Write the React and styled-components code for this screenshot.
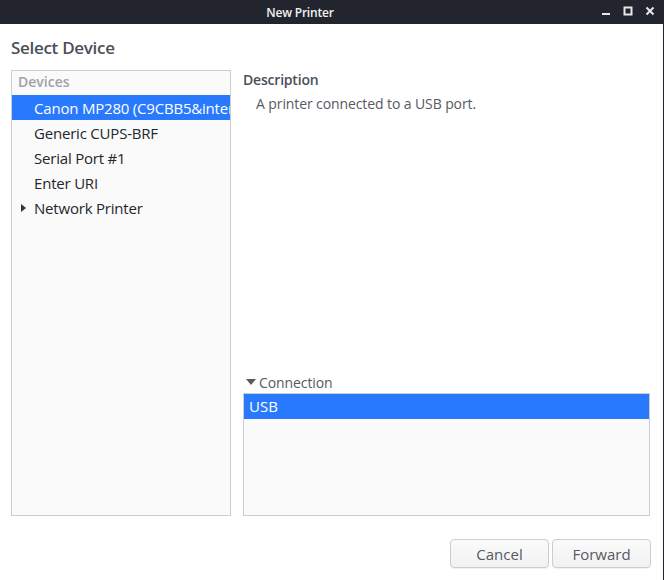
import React from 'react';
import styled, { createGlobalStyle } from 'styled-components';

const GlobalStyle = createGlobalStyle`
  html, body {
    margin: 0;
    padding: 0;
    background: #ffffff;
  }
  body {
    font-family: "Open Sans", "Noto Sans", sans-serif;
  }
`;

const devices = [
  { name: 'Canon MP280 (C9CBB5&inter', selected: true },
  { name: 'Generic CUPS-BRF' },
  { name: 'Serial Port #1' },
  { name: 'Enter URI' },
  { name: 'Network Printer', expander: true },
];

const App = () => {
  return (
    <Window>
      <GlobalStyle />
      <TitleBar>
        <Title>New Printer</Title>
        <WindowButtons>
          <svg width="10" height="10" viewBox="0 0 10 10">
            <rect x="1" y="7" width="8" height="2" fill="#e8e8e8" />
          </svg>
          <svg width="10" height="10" viewBox="0 0 10 10">
            <rect x="1.5" y="1.5" width="7" height="7" fill="none" stroke="#e8e8e8" strokeWidth="2" />
          </svg>
          <svg width="10" height="10" viewBox="0 0 10 10">
            <path d="M1.5 1.5 L8.5 8.5 M8.5 1.5 L1.5 8.5" stroke="#e8e8e8" strokeWidth="2" />
          </svg>
        </WindowButtons>
      </TitleBar>
      <Body>
        <Heading>Select Device</Heading>
        <Columns>
          <DeviceList>
            <ListHeader>Devices</ListHeader>
            {devices.map((d) => (
              <DeviceRow key={d.name} selected={d.selected}>
                <Expander>
                  {d.expander && (
                    <svg width="8" height="10" viewBox="0 0 8 10">
                      <path d="M2 1 L7 5 L2 9 Z" fill="#2e3436" />
                    </svg>
                  )}
                </Expander>
                <RowText>{d.name}</RowText>
              </DeviceRow>
            ))}
          </DeviceList>
          <RightPane>
            <SectionTitle>Description</SectionTitle>
            <DescText>A printer connected to a USB port.</DescText>
            <Spacer />
            <ConnectionLabel>
              <svg width="10" height="8" viewBox="0 0 10 8">
                <path d="M0 1 L10 1 L5 7 Z" fill="#555a63" />
              </svg>
              Connection
            </ConnectionLabel>
            <ConnectionList>
              <ConnectionRow selected>USB</ConnectionRow>
            </ConnectionList>
          </RightPane>
        </Columns>
        <Actions>
          <Button>Cancel</Button>
          <Button>Forward</Button>
        </Actions>
      </Body>
    </Window>
  );
};

const Window = styled.div`
  width: 664px;
  height: 580px;
  display: flex;
  flex-direction: column;
  background: #ffffff;
  overflow: hidden;
`;

const TitleBar = styled.div`
  height: 24px;
  flex: none;
  background: #22252e;
  display: flex;
  align-items: center;
  justify-content: center;
  padding-right: 64px;
  position: relative;
`;

const Title = styled.div`
  color: #f2f2f2;
  font-size: 12px;
  font-weight: 600;
  letter-spacing: -0.2px;
`;

const WindowButtons = styled.div`
  position: absolute;
  right: 9px;
  top: 6px;
  display: flex;
  gap: 12px;
`;

const Body = styled.div`
  flex: 1;
  display: flex;
  flex-direction: column;
  padding: 12px 13px 11px 11px;
  border-right: 1px solid #22252e;
`;

const Heading = styled.div`
  font-size: 17px;
  font-weight: 600;
  color: #4b4f58;
  height: 34px;
  letter-spacing: -0.3px;
`;

const Columns = styled.div`
  display: flex;
  gap: 12px;
  height: 446px;
`;

const DeviceList = styled.div`
  width: 218px;
  border: 1px solid #cdcdcd;
  background: #fafafa;
  overflow: hidden;
`;

const ListHeader = styled.div`
  height: 24px;
  line-height: 22px;
  padding-left: 6px;
  font-size: 14px;
  font-weight: 600;
  color: #a0a3a8;
`;

const DeviceRow = styled.div`
  height: 25px;
  display: flex;
  align-items: center;
  background: ${(p) => (p.selected ? '#2979ff' : 'transparent')};
  color: ${(p) => (p.selected ? '#ffffff' : '#23262c')};
  white-space: nowrap;
  overflow: hidden;
`;

const Expander = styled.div`
  width: 22px;
  flex: none;
  display: flex;
  justify-content: center;
`;

const RowText = styled.span`
  font-size: 15px;
  letter-spacing: -0.2px;
`;

const RightPane = styled.div`
  flex: 1;
  display: flex;
  flex-direction: column;
`;

const SectionTitle = styled.div`
  font-size: 14px;
  font-weight: 600;
  color: #4b4f58;
  letter-spacing: -0.2px;
`;

const DescText = styled.div`
  font-size: 14px;
  color: #555a63;
  padding-left: 13px;
  margin-top: 5px;
  letter-spacing: -0.1px;
`;

const Spacer = styled.div`
  flex: 1;
`;

const ConnectionLabel = styled.div`
  display: flex;
  align-items: center;
  gap: 3px;
  padding-left: 3px;
  font-size: 14px;
  color: #555a63;
  height: 22px;
  letter-spacing: -0.1px;
`;

const ConnectionList = styled.div`
  height: 121px;
  border: 1px solid #cdcdcd;
  background: #fafafa;
`;

const ConnectionRow = styled.div`
  height: 25px;
  line-height: 25px;
  padding-left: 5px;
  font-size: 15px;
  background: ${(p) => (p.selected ? '#2979ff' : 'transparent')};
  color: ${(p) => (p.selected ? '#ffffff' : '#23262c')};
`;

const Actions = styled.div`
  display: flex;
  justify-content: flex-end;
  gap: 3px;
  margin-top: 23px;
  margin-right: -1px;
`;

const Button = styled.button`
  width: 99px;
  height: 29px;
  border: 1px solid #cdcdcd;
  border-radius: 4px;
  background: linear-gradient(#fbfbfb, #f1f1f1);
  box-shadow: 0 1px 1px rgba(0, 0, 0, 0.06);
  font-family: "Open Sans", "Noto Sans", sans-serif;
  font-size: 15px;
  color: #555a63;
  padding: 0;
`;

export default App;
